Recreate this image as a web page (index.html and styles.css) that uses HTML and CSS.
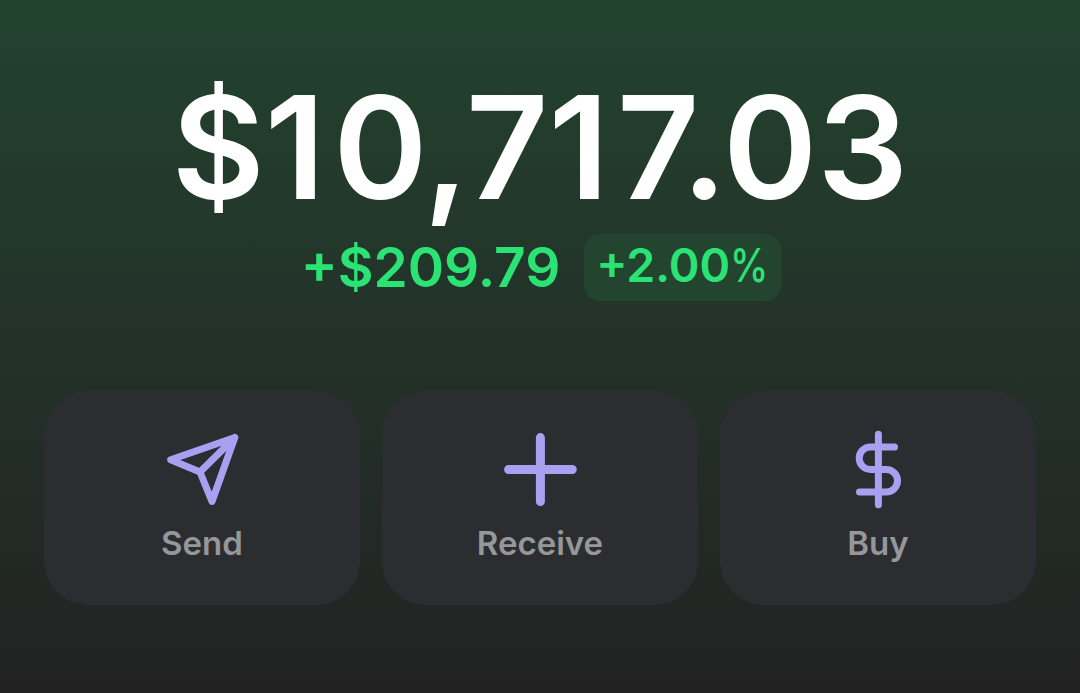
FILE: index.html
```html
<!DOCTYPE html>
<html lang="en">
<head>
    <meta charset="UTF-8">
    <meta name="viewport" content="width=device-width, initial-scale=1.0">
    <title>Wallet</title>
    <link rel="stylesheet" href="styles.css">
</head>
<body>
    <div class="wallet">
        <h1 class="balance">$<span class="one">1</span>0,7<span class="one">1</span>7.03</h1>

        <div class="change">
            <span class="change-amount">+$209.79</span>
            <span class="change-percent">+2.00<span class="percent-sign">%</span></span>
        </div>

        <div class="actions">
            <button class="action">
                <svg class="icon" viewBox="0 0 80 80">
                    <path d="M72.8 7.5 L8.7 29.8 L38 42 L50 71.5 Z M72.8 7.5 L38 42" stroke-width="7"/>
                </svg>
                <span class="label">Send</span>
            </button>
            <button class="action">
                <svg class="icon" viewBox="0 0 80 80">
                    <path d="M40.4 7.6 V71.5 M8.6 39.5 H72.3" stroke-width="9"/>
                </svg>
                <span class="label">Receive</span>
            </button>
            <button class="action">
                <svg class="icon" viewBox="0 0 80 80">
                    <path d="M40.4 4.2 V74.8 M56.5 17 H32.4 A11.2 11.2 0 0 0 32.4 39.4 H48.2 A11.3 11.3 0 0 1 48.2 62 H21.5" stroke-width="7"/>
                </svg>
                <span class="label">Buy</span>
            </button>
        </div>
    </div>
</body>
</html>
```

FILE: styles.css
```css
* {
    box-sizing: border-box;
}

body {
    margin: 0;
    font-family: Inter, sans-serif;
    background-color: #222222;
}

.wallet {
    height: 693px;
    padding: 60px 44px 0;
    background: linear-gradient(#22432e, #23352a 40%, #222222);
}

.balance {
    margin: 0;
    height: 174px;
    color: #fff;
    font-size: 143px;
    font-weight: 600;
    line-height: 174px;
    text-align: center;
}

.one {
    margin-right: 8px;
}

.change {
    display: flex;
    justify-content: center;
    gap: 24px;
    height: 67px;
    padding-left: 2px;
    color: #2be374;
    font-weight: 600;
    line-height: 67px;
}

.change-amount {
    font-size: 55px;
}

.change-percent {
    width: 197px;
    background-color: #23442f;
    border-radius: 16px;
    font-size: 46.5px;
    line-height: 63px;
    text-align: center;
}

.percent-sign {
    display: inline-block;
    margin-right: -7px;
    font-weight: 500;
    transform: scaleX(0.83);
    transform-origin: left;
}

.actions {
    display: grid;
    grid-template-columns: repeat(3, 1fr);
    gap: 22px;
    margin-top: 90px;
}

.action {
    display: flex;
    flex-direction: column;
    align-items: center;
    height: 214px;
    padding: 39px 0 0;
    background-color: #2c2d31;
    border: none;
    border-radius: 44px;
    font-family: inherit;
}

.icon {
    width: 80px;
    height: 80px;
    fill: none;
    stroke: #ab9ff2;
    stroke-linecap: round;
    stroke-linejoin: round;
}

.label {
    margin-top: 12px;
    color: #969798;
    font-size: 33px;
    font-weight: 600;
    line-height: 42px;
}
```
